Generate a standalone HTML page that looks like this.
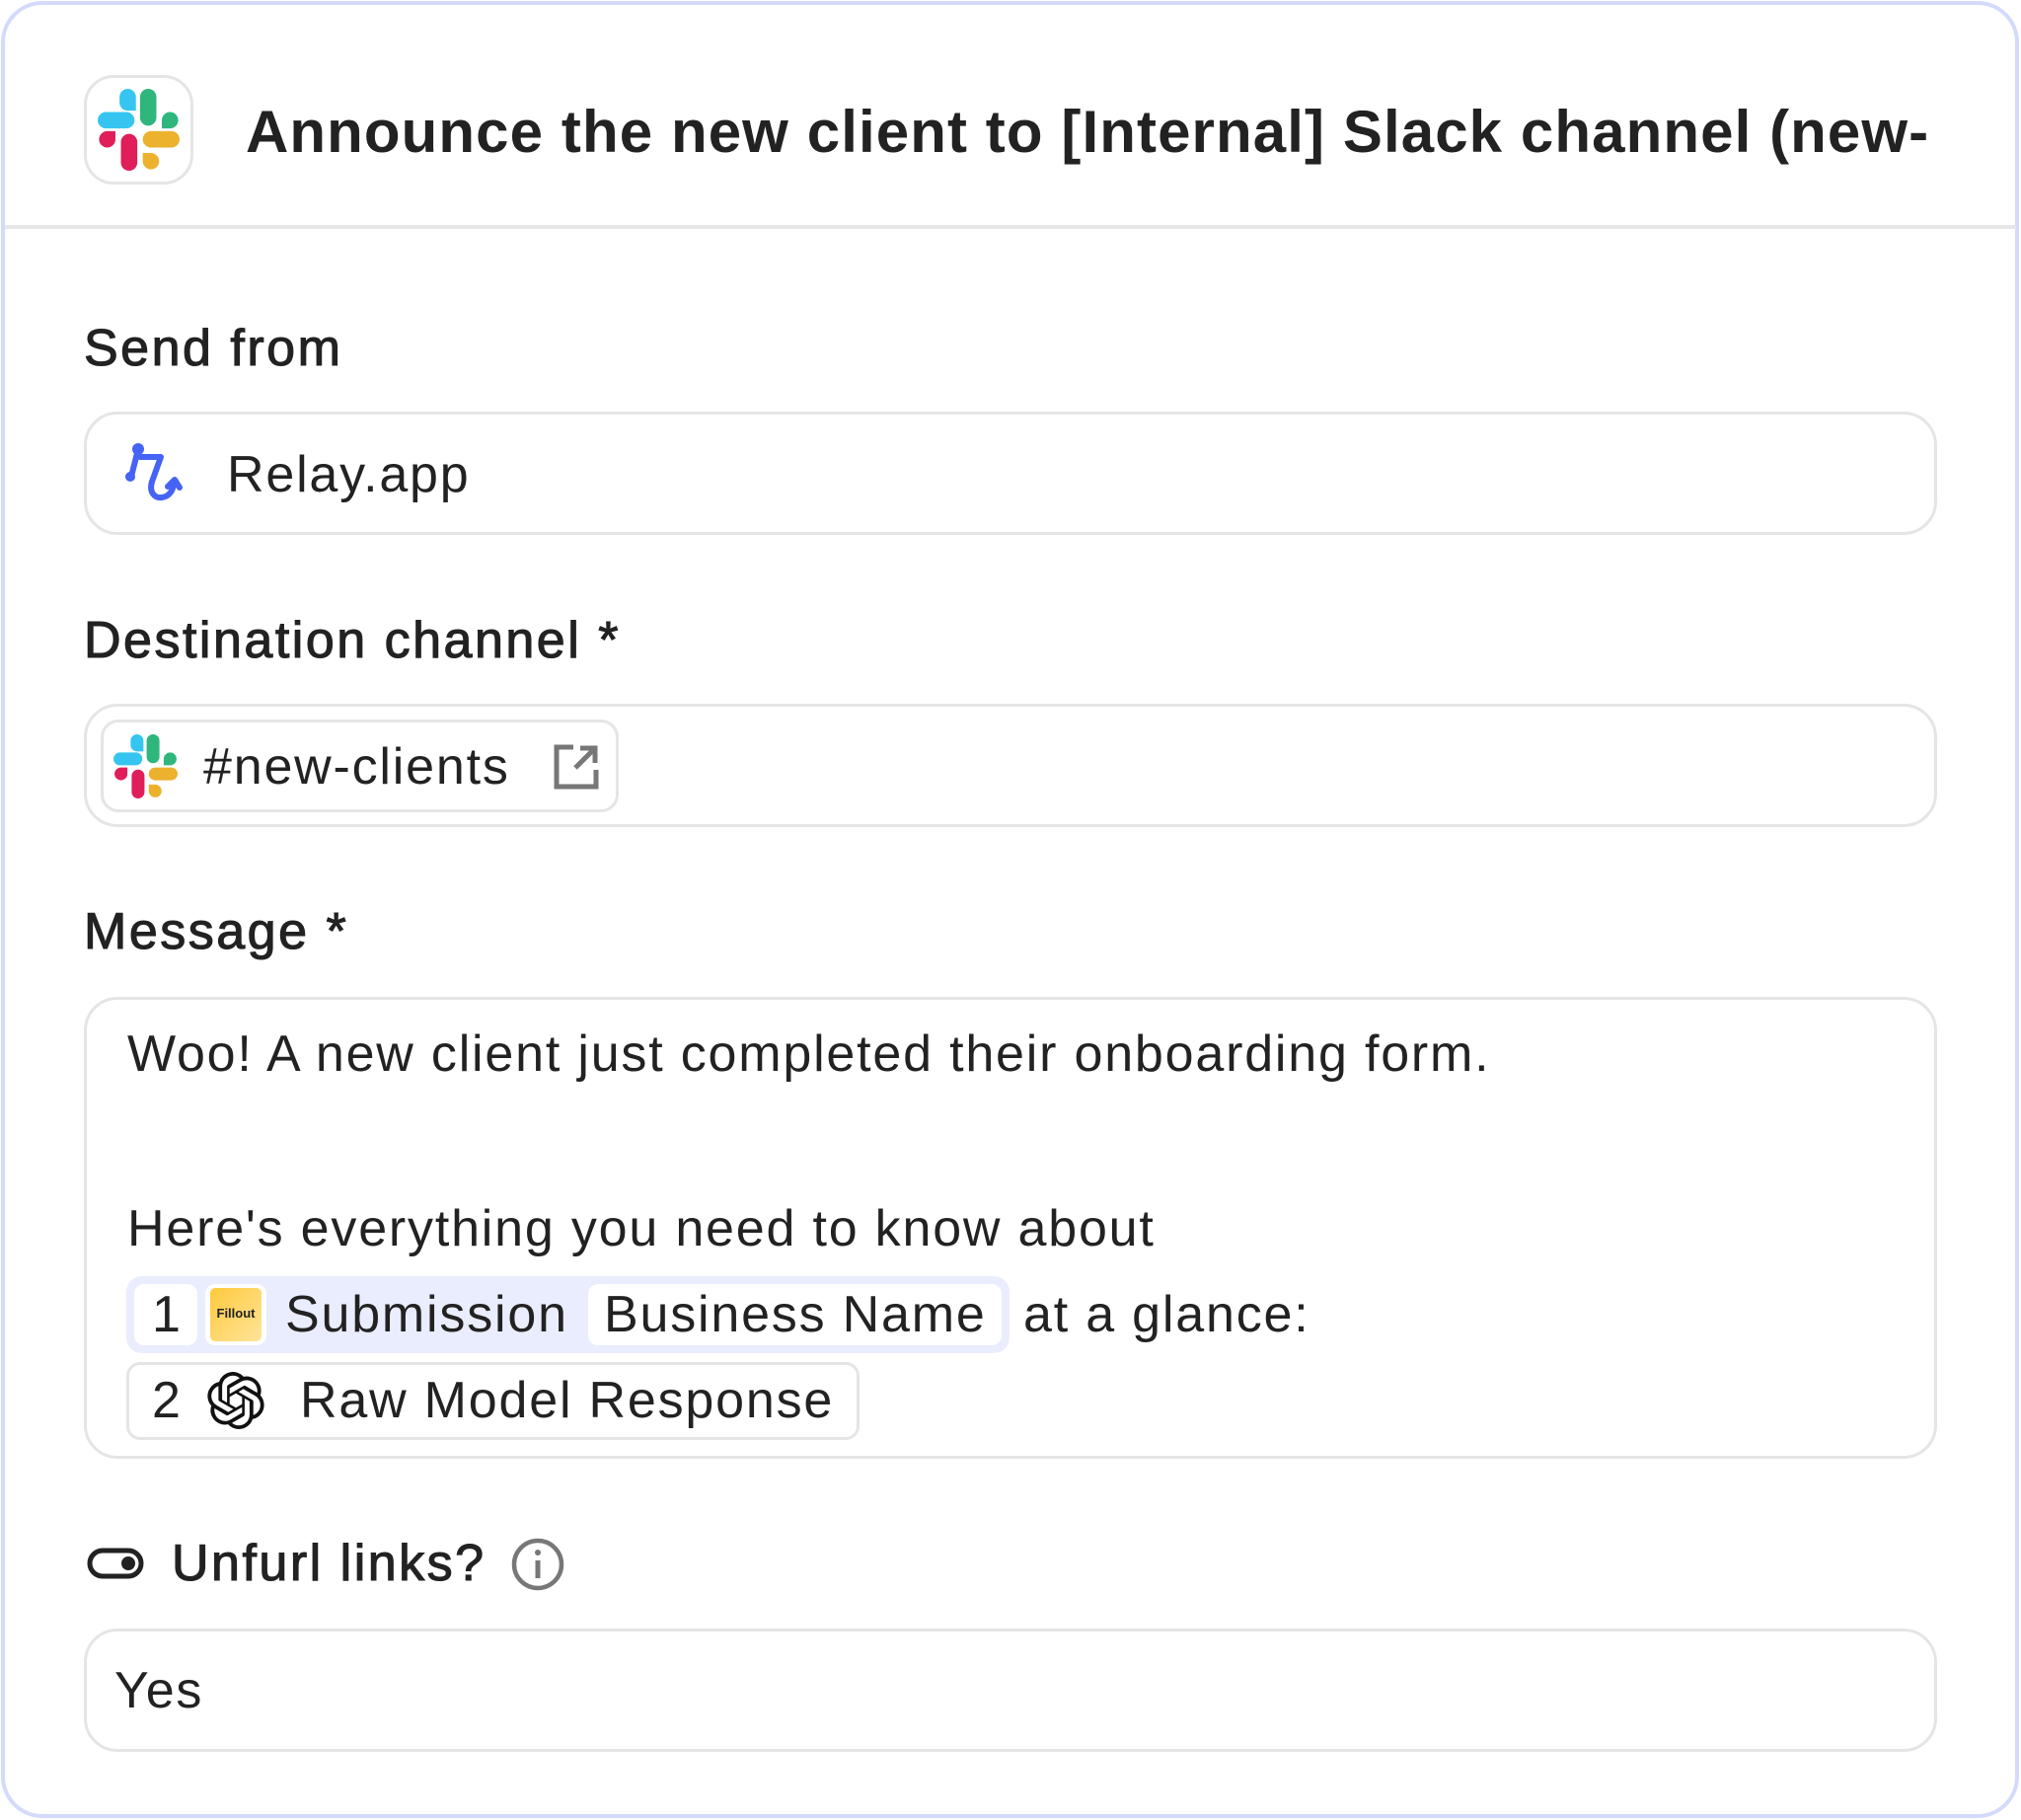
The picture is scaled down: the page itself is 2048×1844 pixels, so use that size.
<!DOCTYPE html>
<html><head><meta charset="utf-8"><style>
*{margin:0;padding:0;box-sizing:border-box}
body{width:2048px;height:1844px;background:#fff;font-family:"Liberation Sans",sans-serif;color:#222;position:relative;overflow:hidden}
.a{position:absolute}
.card{left:1px;top:1px;width:2045px;height:1841px;border:4px solid #d3dafc;border-radius:42px}
.title{left:249px;top:98px;font-size:60px;font-weight:700;white-space:nowrap;letter-spacing:1.1px;line-height:72px}
.div{left:5px;top:228px;width:2038px;height:4px;background:#e6e6e6}
.lbl{font-size:52px;font-weight:400;-webkit-text-stroke:1.1px #222;white-space:nowrap;line-height:60px;letter-spacing:2.5px}
.box{left:85px;width:1878px;border:3px solid #e5e5e5;border-radius:34px}
.t{font-size:52px;white-space:nowrap;line-height:60px;letter-spacing:1.8px}
</style></head><body>
<div class="a card"></div>
<div class="a" style="left:85px;top:76px;width:111px;height:111px;border:3px solid #e5e5e5;border-radius:30px"></div>
<svg class="a" style="left:99px;top:90px" width="83" height="83" viewBox="0 0 60 60">
<rect x="0" y="17" width="27" height="12" rx="6" fill="#36c5f0"/><path d="M16 6a6 6 0 0 1 12 0v10h-6a6 6 0 0 1-6-6z" fill="#36c5f0"/>
<rect x="31" y="0" width="12" height="27" rx="6" fill="#2eb67d"/><path d="M47 23a6 6 0 0 1 12 0a6 6 0 0 1-6 6h-6z" fill="#2eb67d"/>
<rect x="33" y="31" width="27" height="12" rx="6" fill="#ecb22e"/><path d="M33 47h6a6 6 0 0 1 0 12a6 6 0 0 1-6-6z" fill="#ecb22e"/>
<rect x="17" y="33" width="12" height="27" rx="6" fill="#e01e5a"/><path d="M13 31v6a6 6 0 0 1-12 0a6 6 0 0 1 6-6z" fill="#e01e5a"/>
</svg>
<div class="a title">Announce the new client to [Internal] Slack channel (new-</div>
<div class="a div"></div>

<div class="a lbl" style="left:85px;top:323px">Send from</div>
<div class="a box" style="top:417px;height:125px"></div>
<svg class="a" style="left:110px;top:430px" width="90" height="90" viewBox="0 0 90 90" fill="none" stroke="#4563f5" stroke-width="6" stroke-linecap="round" stroke-linejoin="round">
<circle cx="30" cy="25" r="6" fill="#4563f5" stroke="none"/><circle cx="22" cy="53" r="5" fill="#4563f5" stroke="none"/>
<path d="M30 25L23 53"/><path d="M32 33H53L44 58C41 68 46 75 54 74C62 73 66 66 66 59"/><path d="M60 63L67 56L72 64"/>
</svg>
<div class="a t" style="left:230px;top:451px">Relay.app</div>

<div class="a lbl" style="left:85px;top:619px">Destination channel *</div>
<div class="a box" style="top:713px;height:125px"></div>
<div class="a" style="left:102px;top:729px;width:525px;height:94px;border:3px solid #e5e5e5;border-radius:18px"></div>
<svg class="a" style="left:115px;top:744px" width="65" height="65" viewBox="0 0 60 60">
<rect x="0" y="17" width="27" height="12" rx="6" fill="#36c5f0"/><path d="M16 6a6 6 0 0 1 12 0v10h-6a6 6 0 0 1-6-6z" fill="#36c5f0"/>
<rect x="31" y="0" width="12" height="27" rx="6" fill="#2eb67d"/><path d="M47 23a6 6 0 0 1 12 0a6 6 0 0 1-6 6h-6z" fill="#2eb67d"/>
<rect x="33" y="31" width="27" height="12" rx="6" fill="#ecb22e"/><path d="M33 47h6a6 6 0 0 1 0 12a6 6 0 0 1-6-6z" fill="#ecb22e"/>
<rect x="17" y="33" width="12" height="27" rx="6" fill="#e01e5a"/><path d="M13 31v6a6 6 0 0 1-12 0a6 6 0 0 1 6-6z" fill="#e01e5a"/>
</svg>
<div class="a t" style="left:206px;top:747px">#new-clients</div>
<svg class="a" style="left:559px;top:752px" width="50" height="50" viewBox="0 0 50 50" fill="none" stroke="#777" stroke-width="5">
<path d="M22 5H5V45H45V28"/><path d="M24 26L43 7"/><path d="M29 6H44V21"/>
</svg>

<div class="a lbl" style="left:85px;top:914px">Message *</div>
<div class="a box" style="top:1010px;height:468px"></div>
<div class="a t" style="left:129px;top:1038px">Woo! A new client just completed their onboarding form.</div>
<div class="a t" style="left:129px;top:1215px">Here's everything you need to know about</div>
<div class="a" style="left:128px;top:1293px;width:895px;height:78px;background:#e9edfd;border-radius:16px"></div>
<div class="a" style="left:136px;top:1301px;width:64px;height:62px;background:#fff;border-radius:10px"></div>
<div class="a t" style="left:154px;top:1302px">1</div>
<div class="a" style="left:208px;top:1301px;width:62px;height:62px;background:#fff;border-radius:10px"></div>
<div class="a" style="left:213px;top:1305px;width:52px;height:54px;background:linear-gradient(135deg,#ffc93c,#ffe49a);border-radius:5px"></div>
<div class="a" style="left:213px;top:1323px;width:52px;text-align:center;font-size:13px;font-weight:700;color:#222">Fillout</div>
<div class="a t" style="left:289px;top:1302px">Submission</div>
<div class="a" style="left:596px;top:1301px;width:419px;height:62px;background:#fff;border-radius:10px"></div>
<div class="a t" style="left:612px;top:1302px">Business Name</div>
<div class="a t" style="left:1037px;top:1302px">at a glance:</div>
<div class="a" style="left:128px;top:1380px;width:743px;height:79px;border:3px solid #e5e5e5;border-radius:14px"></div>
<div class="a t" style="left:154px;top:1389px">2</div>
<svg class="a" style="left:210px;top:1390px" width="58" height="58" viewBox="0 0 24 24"><path fill="#111" d="M22.28 9.82a5.98 5.98 0 0 0-.52-4.91 6.05 6.05 0 0 0-6.510-2.9A6.07 6.07 0 0 0 4.98 4.18a5.98 5.98 0 0 0-4 2.9 6.05 6.05 0 0 0 .74 7.1 5.980 5.98 0 0 0 .51 4.91 6.05 6.05 0 0 0 6.52 2.9A5.98 5.98 0 0 0 13.26 24a6.06 6.06 0 0 0 5.77-4.21 5.99 5.99 0 0 0 4-2.9 6.06 6.06 0 0 0-.75-7.07zm-9.02 12.61a4.48 4.48 0 0 1-2.88-1.04l.14-.08 4.78-2.76a.8.8 0 0 0 .39-.68v-6.74l2.02 1.17a.07.07 0 0 1 .04.05v5.58a4.5 4.5 0 0 1-4.49 4.5zm-9.66-4.13a4.47 4.47 0 0 1-.53-3.01l.14.09 4.78 2.76a.77.77 0 0 0 .78 0l5.84-3.37v2.33a.08.08 0 0 1-.03.06L9.74 20a4.5 4.5 0 0 1-6.14-1.65zM2.34 7.9a4.49 4.49 0 0 1 2.37-1.97V11.6a.77.77 0 0 0 .39.68l5.81 3.35-2.02 1.17a.08.08 0 0 1-.07 0l-4.83-2.79A4.5 4.5 0 0 1 2.34 7.870zm16.6 3.86-5.84-3.39 2.02-1.16a.08.08 0 0 1 .07 0l4.83 2.79a4.49 4.49 0 0 1-.68 8.1v-5.68a.79.79 0 0 0-.4-.66zm2.01-3.02-.14-.09-4.77-2.78a.78.78 0 0 0-.79 0L9.41 9.23V6.9a.07.07 0 0 1 .03-.06l4.83-2.79a4.5 4.5 0 0 1 6.68 4.66zM8.31 12.86l-2.02-1.16a.08.08 0 0 1-.04-.06V6.07a4.5 4.5 0 0 1 7.38-3.45l-.14.08-4.78 2.76a.8.8 0 0 0-.39.68zm1.1-2.37 2.6-1.5 2.61 1.5v3l-2.6 1.5-2.61-1.5z"/></svg>
<div class="a t" style="left:304px;top:1389px">Raw Model Response</div>

<svg class="a" style="left:88px;top:1566px" width="58" height="36" viewBox="0 0 58 36" fill="none" stroke="#222" stroke-width="5"><rect x="3" y="5" width="52" height="26" rx="13"/><circle cx="42" cy="18" r="7" fill="#222" stroke="none"/></svg>
<div class="a lbl" style="left:174px;top:1554px">Unfurl links?</div>
<svg class="a" style="left:517px;top:1557px" width="56" height="56" viewBox="0 0 56 56" fill="none" stroke="#777" stroke-width="4.5"><circle cx="28" cy="28" r="24"/><path d="M28 24V42" stroke-width="5"/><circle cx="28" cy="16" r="3" fill="#777" stroke="none"/></svg>
<div class="a box" style="top:1650px;height:125px"></div>
<div class="a t" style="left:116px;top:1683px">Yes</div>
</body></html>
